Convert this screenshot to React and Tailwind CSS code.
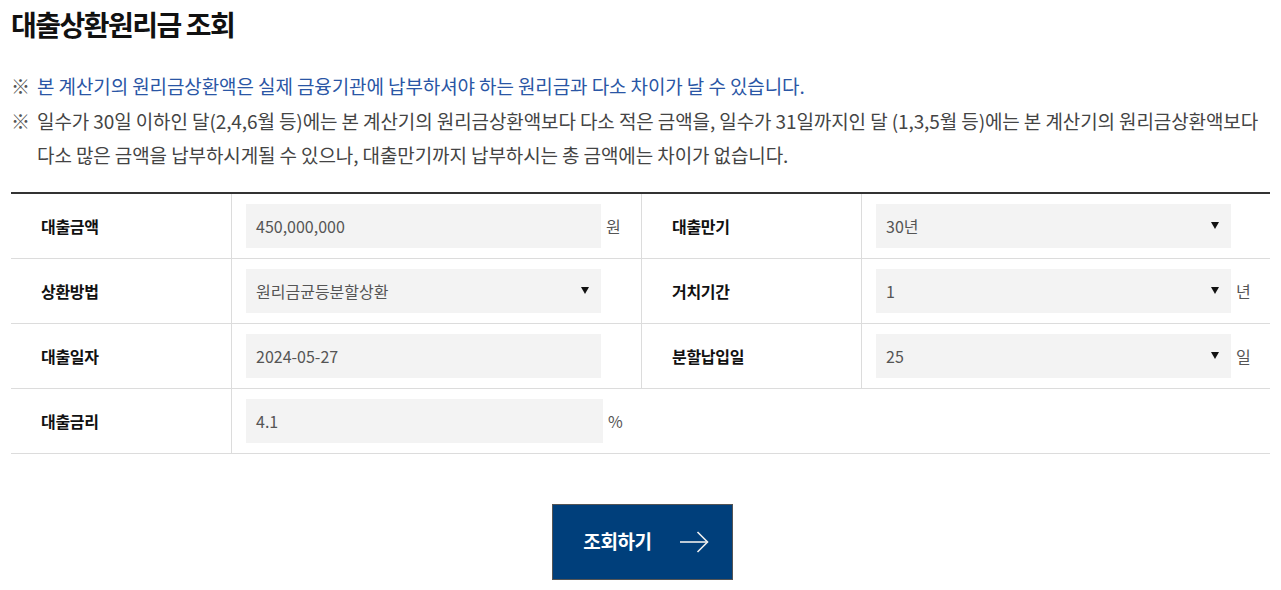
import React from "react";

const font = { fontFamily: '"Noto Sans CJK KR", "Noto Sans", sans-serif' };

const Caret = () => (
  <svg width="8" height="7" viewBox="0 0 8 7" className="mr-[2px]">
    <path d="M0 0H8L4 7Z" fill="#111" />
  </svg>
);

const Field = ({ value, select, unit }) => (
  <div className="flex items-center h-full pl-[14px]">
    <div className="flex items-center justify-between w-[355px] h-[44px] bg-[#f3f3f3] pl-[10px] pr-[10px] text-[16px] text-[#555]">
      <span>{value}</span>
      {select ? <Caret /> : null}
    </div>
    {unit ? <span className="ml-[5px] text-[16px] text-[#555]">{unit}</span> : null}
  </div>
);

const Label = ({ children, border }) => (
  <div
    className={
      "flex items-center pl-[30px] text-[16px] font-bold text-[#111] tracking-[-0.3px] " +
      (border ? "border-l border-[#dcdcdc]" : "")
    }
  >
    {children}
  </div>
);

const App = () => {
  return (
    <div style={font} className="bg-white w-[1281px] h-[590px] px-[11px] pt-[4px]">
      <h1 className="text-[28px] font-bold text-[#111] tracking-[-1.5px] leading-[40px]">
        대출상환원리금 조회
      </h1>

      <div className="mt-[25px] text-[19px] tracking-[-0.1px] leading-[34.5px]">
        <p className="flex text-[#2a56a5]">
          <span className="w-[26px] shrink-0 text-[#555]">※</span>
          <span>본 계산기의 원리금상환액은 실제 금융기관에 납부하셔야 하는 원리금과 다소 차이가 날 수 있습니다.</span>
        </p>
        <p className="flex text-[#444]">
          <span className="w-[26px] shrink-0 text-[#555]">※</span>
          <span>
            일수가 30일 이하인 달(2,4,6월 등)에는 본 계산기의 원리금상환액보다 다소 적은 금액을, 일수가 31일까지인 달 (1,3,5월 등)에는 본 계산기의 원리금상환액보다 다소 많은 금액을 납부하시게될 수 있으나, 대출만기까지 납부하시는 총 금액에는 차이가 없습니다.
          </span>
        </p>
      </div>

      <div className="mt-[19px] border-t-2 border-[#333]">
        <div className="grid grid-cols-[220px_410px_220px_1fr] border-b border-[#dcdcdc] h-[65px]">
          <Label>대출금액</Label>
          <div className="border-l border-[#dcdcdc]"><Field value="450,000,000" unit="원" /></div>
          <Label border>대출만기</Label>
          <div className="border-l border-[#dcdcdc]"><Field value="30년" select /></div>
        </div>
        <div className="grid grid-cols-[220px_410px_220px_1fr] border-b border-[#dcdcdc] h-[65px]">
          <Label>상환방법</Label>
          <div className="border-l border-[#dcdcdc]"><Field value="원리금균등분할상환" select /></div>
          <Label border>거치기간</Label>
          <div className="border-l border-[#dcdcdc]"><Field value="1" select unit="년" /></div>
        </div>
        <div className="grid grid-cols-[220px_410px_220px_1fr] border-b border-[#dcdcdc] h-[65px]">
          <Label>대출일자</Label>
          <div className="border-l border-[#dcdcdc]"><Field value="2024-05-27" /></div>
          <Label border>분할납입일</Label>
          <div className="border-l border-[#dcdcdc]"><Field value="25" select unit="일" /></div>
        </div>
        <div className="grid grid-cols-[220px_1fr] border-b border-[#dcdcdc] h-[65px]">
          <Label>대출금리</Label>
          <div className="border-l border-[#dcdcdc] flex items-center pl-[14px]">
            <div className="flex items-center w-[357px] h-[44px] bg-[#f3f3f3] px-[10px] text-[16px] text-[#555]">4.1</div>
            <span className="ml-[5px] text-[16px] text-[#555]">%</span>
          </div>
        </div>
      </div>

      <div className="flex justify-center mt-[50px] pl-[4px]">
        <button className="flex items-center justify-center gap-[28px] w-[181px] h-[76px] pl-[7px] bg-[#003f7b] border border-[#555] text-white text-[19px] font-bold tracking-[-0.4px]">
          <span>조회하기</span>
          <svg width="29" height="22" viewBox="0 0 29 22" fill="none" stroke="#eee" strokeWidth="1.6">
            <path d="M0 11H27.5" />
            <path d="M17.5 1L27.5 11L17.5 21" />
          </svg>
        </button>
      </div>
    </div>
  );
};

export default App;
